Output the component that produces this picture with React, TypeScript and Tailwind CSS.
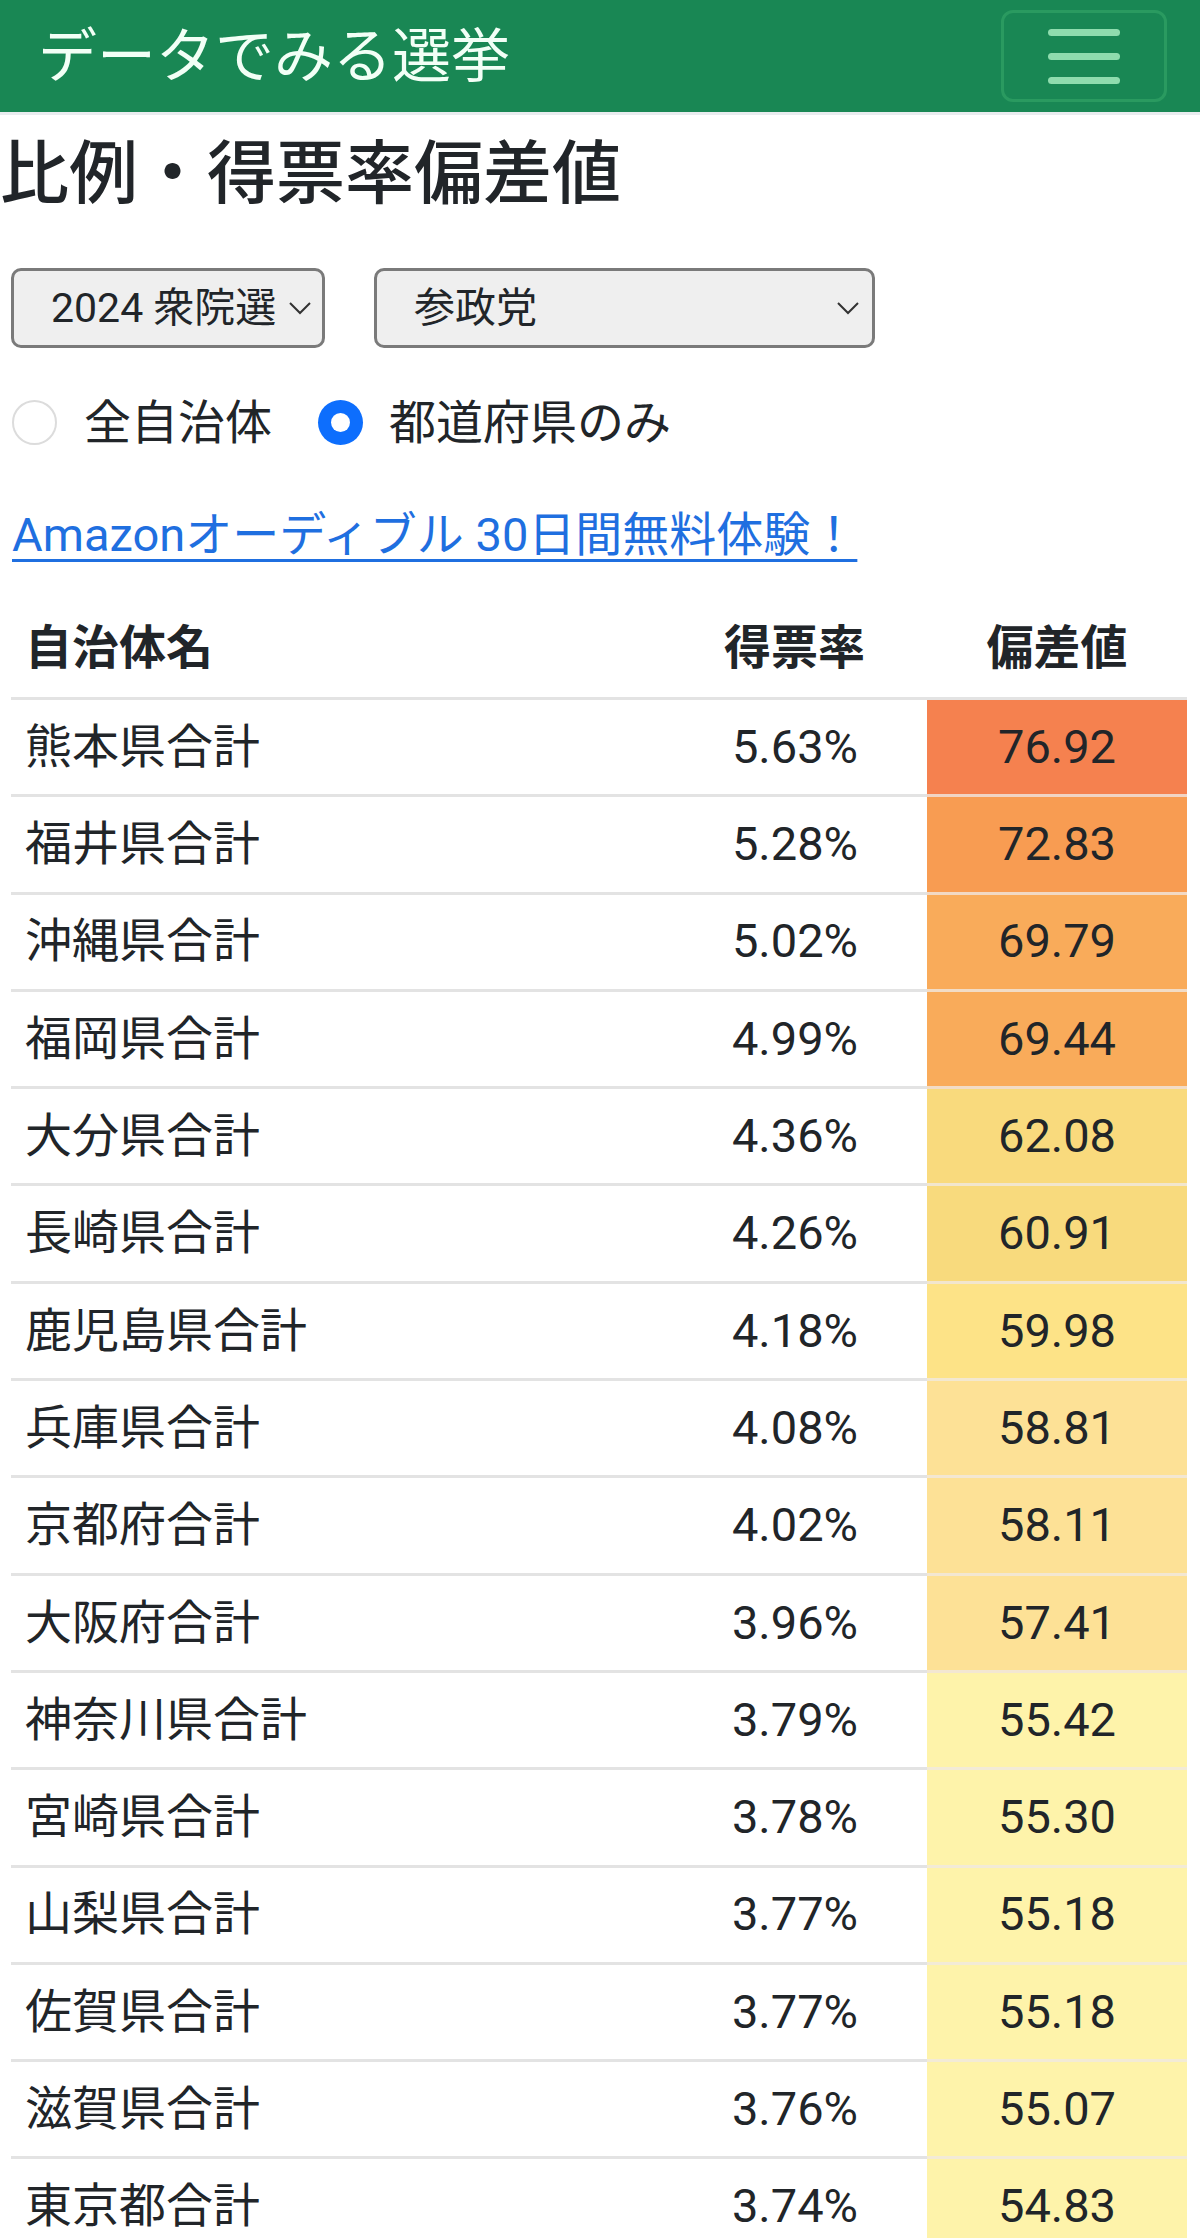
import React from "react";

const rows: { name: string; rate: string; dev: string; bg: string }[] = [
  { name: "熊本県合計", rate: "5.63%", dev: "76.92", bg: "#f5814f" },
  { name: "福井県合計", rate: "5.28%", dev: "72.83", bg: "#f89c52" },
  { name: "沖縄県合計", rate: "5.02%", dev: "69.79", bg: "#f9ab5a" },
  { name: "福岡県合計", rate: "4.99%", dev: "69.44", bg: "#f9ab5a" },
  { name: "大分県合計", rate: "4.36%", dev: "62.08", bg: "#f9da7d" },
  { name: "長崎県合計", rate: "4.26%", dev: "60.91", bg: "#f8da7d" },
  { name: "鹿児島県合計", rate: "4.18%", dev: "59.98", bg: "#fde387" },
  { name: "兵庫県合計", rate: "4.08%", dev: "58.81", bg: "#fde196" },
  { name: "京都府合計", rate: "4.02%", dev: "58.11", bg: "#fde196" },
  { name: "大阪府合計", rate: "3.96%", dev: "57.41", bg: "#fde196" },
  { name: "神奈川県合計", rate: "3.79%", dev: "55.42", bg: "#fef3aa" },
  { name: "宮崎県合計", rate: "3.78%", dev: "55.30", bg: "#fef3aa" },
  { name: "山梨県合計", rate: "3.77%", dev: "55.18", bg: "#fef3aa" },
  { name: "佐賀県合計", rate: "3.77%", dev: "55.18", bg: "#fef3aa" },
  { name: "滋賀県合計", rate: "3.76%", dev: "55.07", bg: "#fef3aa" },
  { name: "東京都合計", rate: "3.74%", dev: "54.83", bg: "#fef3aa" },
];

function Chevron() {
  return (
    <svg width="24" height="14" viewBox="0 0 24 14" fill="none">
      <polyline points="2,2 12,12 22,2" stroke="#333" strokeWidth="2" />
    </svg>
  );
}

export default function App() {
  return (
    <div
      className="w-[1200px] h-[2238px] overflow-hidden bg-white text-[#212529]"
      style={{ fontFamily: 'Roboto, "Noto Sans CJK JP", sans-serif' }}
    >
      <header className="h-[112px] bg-[#198754] flex items-center justify-between pl-[38px] pr-[33px]">
        <div className="text-[59px] leading-none text-[#f2fff6]">データでみる選挙</div>
        <div className="w-[166px] h-[92px] rounded-[12px] border-[3px] border-[#2a9a60] flex flex-col items-center justify-center gap-[17px]">
          <div className="w-[72px] h-[7px] rounded-full bg-[#8fdcae]" />
          <div className="w-[72px] h-[7px] rounded-full bg-[#8fdcae]" />
          <div className="w-[72px] h-[7px] rounded-full bg-[#8fdcae]" />
        </div>
      </header>
      <div className="h-[3px] bg-[#e9ecef]" />

      <h1 className="mt-[19px] text-[69px] leading-[82px] font-medium">比例・得票率偏差値</h1>

      <div className="mt-[52px] flex gap-[49px] pl-[11px]">
        <div className="w-[314px] h-[80px] rounded-[10px] border-[3px] border-[#7a7a7a] bg-[#efefef] flex items-center justify-between pl-[37px] pr-[10px]">
          <span className="text-[41px] leading-none">2024 衆院選</span>
          <Chevron />
        </div>
        <div className="w-[501px] h-[80px] rounded-[10px] border-[3px] border-[#7a7a7a] bg-[#efefef] flex items-center justify-between pl-[37px] pr-[12px]">
          <span className="text-[41px] leading-none">参政党</span>
          <Chevron />
        </div>
      </div>

      <div className="mt-[46px] h-[56px] flex items-center pl-[12px]">
        <div className="w-[45px] h-[45px] rounded-full border-[2px] border-[#dcdcdc] bg-white" />
        <span className="ml-[27px] text-[47px] leading-none">全自治体</span>
        <div className="ml-[46px] w-[45px] h-[45px] rounded-full bg-[#0d6efd] flex items-center justify-center">
          <div className="w-[19px] h-[19px] rounded-full bg-white" />
        </div>
        <span className="ml-[26px] text-[47px] leading-none">都道府県のみ</span>
      </div>

      <div className="mt-[50px] pl-[12px]">
        <a className="text-[47px] leading-[69px] text-[#1f6fe0] underline decoration-[3px] underline-offset-[8px]">
          Amazonオーディブル 30日間無料体験！
        </a>
      </div>

      <div className="mt-[31px] ml-[11px] w-[1176px]">
        <div className="flex h-[100px] border-b-[3px] border-[#e3e3e3] items-center font-bold text-[47px]">
          <div className="flex-1 pl-[14px]">自治体名</div>
          <div className="w-[300px] text-right pr-[62px]">得票率</div>
          <div className="w-[260px] text-center">偏差値</div>
        </div>
        {rows.map((r) => (
          <div key={r.name} className="flex h-[97.3px] text-[47px]">
            <div className="flex-1 pl-[14px] flex items-center border-b-[3px] border-[#e3e3e3]">{r.name}</div>
            <div className="w-[300px] pr-[69px] flex items-center justify-end border-b-[3px] border-[#e3e3e3]">{r.rate}</div>
            <div
              className="w-[260px] flex items-center justify-center border-b-[3px] border-[rgba(240,232,225,0.8)]"
              style={{ backgroundColor: r.bg }}
            >
              {r.dev}
            </div>
          </div>
        ))}
      </div>
    </div>
  );
}
